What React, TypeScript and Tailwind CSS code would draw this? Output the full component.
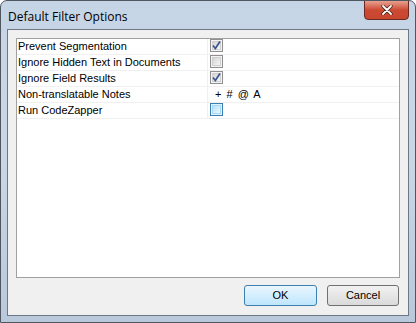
import React, { ReactElement } from 'react'

type Row = { label: string; kind: 'checked' | 'unchecked' | 'hot' | 'text'; value?: string }

const rows: Row[] = [
  { label: 'Prevent Segmentation', kind: 'checked' },
  { label: 'Ignore Hidden Text in Documents', kind: 'unchecked' },
  { label: 'Ignore Field Results', kind: 'checked' },
  { label: 'Non-translatable Notes', kind: 'text', value: '+ # @ A' },
  { label: 'Run CodeZapper', kind: 'hot' },
]

const CheckBox = ({ kind }: { kind: Row['kind'] }): ReactElement => {
  const hot = kind === 'hot'
  return (
    <div
      className={
        hot
          ? 'w-[13px] h-[13px] border border-[#3c7fb1] bg-[#dff2fd] p-[1px]'
          : 'relative w-[13px] h-[13px] border border-[#8f8f8f] bg-[#f4f4f4] p-[1px]'
      }
    >
      <div
        className={
          hot
            ? 'w-full h-full bg-gradient-to-br from-[#b7e1fb] to-[#e9f7fe] border border-[#a9d9f7]'
            : 'w-full h-full bg-gradient-to-br from-[#d4d4d4] to-[#f7f7f7] border border-[#cfcfcf]'
        }
      />
      {kind === 'checked' && (
        <svg viewBox="0 0 11 11" className="absolute left-0 top-0 w-[11px] h-[11px]">
          <path d="M2 5.5 L4.3 8.5 L9 1.5" fill="none" stroke="#3f5590" strokeWidth="1.7" />
        </svg>
      )}
    </div>
  )
}

const App = (): ReactElement => {
  return (
    <div
      className="w-[416px] h-[323px] flex flex-col rounded-t-[7px] border border-[#4e5660] bg-gradient-to-b from-[#c6d5e6] via-[#c9d7e5] to-[#b9c9db] overflow-hidden"
      style={{ fontFamily: '"Liberation Sans", Arial, sans-serif' }}
    >
      <div className="h-[28px] flex items-start justify-between pl-[7px] pr-[6px]">
        <div
          className="pt-[7px] text-[12px] text-black"
          style={{ fontFamily: '"Open Sans", "Liberation Sans", sans-serif' }}
        >
          Default Filter Options
        </div>
        <div className="w-[45px] h-[20px] -mt-[1px] rounded-b-[4px] border border-[#6a2a22] bg-gradient-to-b from-[#e6a08f] via-[#cc4a33] to-[#c8452f] flex items-center justify-center">
          <svg viewBox="0 0 12 10" className="w-[12px] h-[10px]">
            <path d="M2 1 L10 9 M10 1 L2 9" stroke="#3b1a14" strokeWidth="3.2" strokeLinecap="round" />
            <path d="M2 1 L10 9 M10 1 L2 9" stroke="#ffffff" strokeWidth="1.8" strokeLinecap="round" />
          </svg>
        </div>
      </div>
      <div className="flex-1 mx-[6px] mb-[6px] border border-[#6d7887] bg-[#f0f0f0] flex flex-col px-[8px] pt-[8px]">
        <div className="h-[240px] border border-[#a0a0a0] bg-white">
          {rows.map((row) => (
            <div key={row.label} className="h-[16px] flex border-b border-[#f0f0f0]">
              <div className="w-[191px] border-r border-[#f0f0f0] pl-[1px] text-[11px] leading-[15px] text-black whitespace-nowrap">
                {row.label}
              </div>
              <div className="flex-1 pl-[2px] flex items-start">
                {row.kind === 'text' ? (
                  <span className="pl-[5px] text-[11px] leading-[15px] text-black tracking-[1px]">{row.value}</span>
                ) : (
                  <CheckBox kind={row.kind} />
                )}
              </div>
            </div>
          ))}
        </div>
        <div className="flex justify-end gap-[10px] mt-[7px] pr-[1px]">
          <button className="w-[73px] h-[21px] rounded-[3px] border border-[#3c7fb1] bg-gradient-to-b from-[#eaf6fd] to-[#bee6fd] text-[11px] text-black">
            OK
          </button>
          <button className="w-[72px] h-[21px] rounded-[3px] border border-[#707070] bg-gradient-to-b from-[#f2f2f2] to-[#dadada] text-[11px] text-black">
            Cancel
          </button>
        </div>
      </div>
    </div>
  )
}

export default App
